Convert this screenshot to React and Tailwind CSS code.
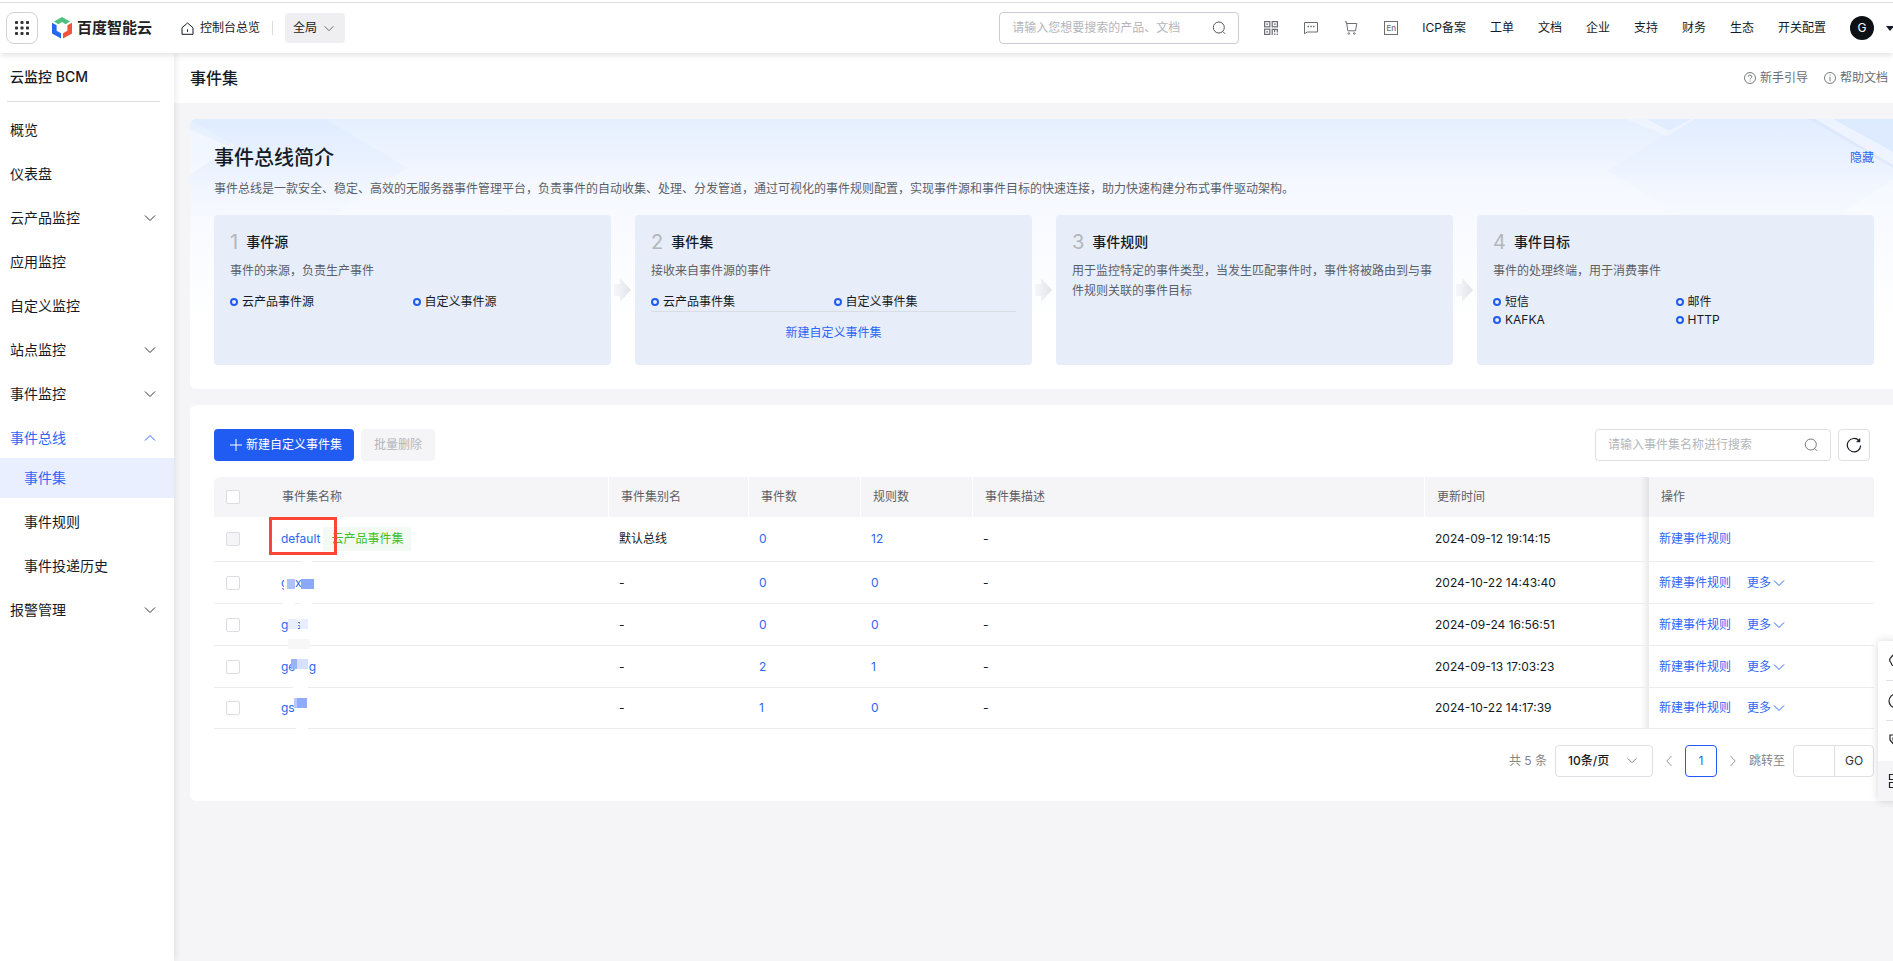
import React from "react";

const Chevron = ({ className = "", d = "M1 1.5 6 6.5 11 1.5" }) => (
  <svg viewBox="0 0 12 8" className={`h-2 w-3 shrink-0 ${className}`} fill="none" stroke="currentColor" strokeWidth="1" aria-hidden="true">
    <path d={d} />
  </svg>
);

const SearchIcon = ({ className = "" }) => (
  <svg viewBox="0 0 14 14" className={`size-3.5 shrink-0 ${className}`} fill="none" stroke="currentColor" aria-hidden="true">
    <circle cx="6.8" cy="6.5" r="5.5" />
    <path d="m10.8 10.5 2.3 2.3" />
  </svg>
);

const Logo = () => (
  <a href="#home" className="flex items-center gap-[5px]" aria-label="百度智能云">
    <svg viewBox="0 0 20 22" className="h-[22px] w-5" aria-hidden="true">
      <path d="M10 0 18 4.6 13.6 7.2 10 5.1 6.4 7.2 2 4.6Z" fill="#4ebf7e" />
      <path d="M0 5.7 4.6 8.3V13.7L9 16.3V21.6L0 16.4Z" fill="#2468f2" />
      <path d="M20 5.7 15.4 8.3V13.7L11 16.3V21.6L20 16.4Z" fill="#f0553a" />
    </svg>
    <span className="text-[15px] leading-5 font-bold text-[#222]">百度智能云</span>
  </a>
);

const QrIcon = () => (
  <svg viewBox="0 0 14 14" className="size-3.5" fill="none" stroke="currentColor" strokeWidth="1.2" aria-hidden="true">
    <rect x=".6" y=".6" width="5.200" height="5.200" />
    <rect x="8.200" y=".6" width="5.200" height="5.200" />
    <rect x=".6" y="8.200" width="5.200" height="5.200" />
    <path d="M2.300 3.200h1.800M9.900 3.200h1.800M2.300 10.800h1.800M8.200 14V8.300h2.400v3M10.600 8.300h3.300M13.300 8v3.500M10.800 14v-1.500M13.300 14v-1.500" />
  </svg>
);

const MessageIcon = () => (
  <svg viewBox="0 0 14 14" className="size-3.5" fill="none" stroke="currentColor" aria-hidden="true">
    <path d="M.5 1.500h13v9.500H3.200L.5 12.800Z" />
    <path d="M3.500 5.500h1.500M6.300 5.500h1.500M9 5.500h1.500" strokeWidth="1.300" />
  </svg>
);

const CartIcon = () => (
  <svg viewBox="0 0 14 14" className="size-3.5" fill="none" stroke="currentColor" aria-hidden="true">
    <path d="M.8.8h1.700l1.300 9h7.700l1.300-7.300H2.800" />
    <circle cx="4.800" cy="12.500" r=".8" />
    <circle cx="10.300" cy="12.500" r=".8" />
  </svg>
);

const EnIcon = () => (
  <span className="flex size-3.5 items-center justify-center border border-current text-[8px] leading-none font-medium">En</span>
);

const topIcons = [
  ["二维码", QrIcon],
  ["消息", MessageIcon],
  ["购物车", CartIcon],
  ["语言", EnIcon],
];

const topLinks = ["ICP备案", "工单", "文档", "企业", "支持", "财务", "生态", "开关配置"];

function TopBar() {
  return (
    <header className="relative z-20 flex h-[53px] shrink-0 items-center overflow-x-clip border-t-3 border-white bg-white pl-1.5 text-xs whitespace-nowrap shadow-[0_2px_6px_rgba(0,0,0,0.12)] before:absolute before:inset-x-0 before:-top-px before:h-px before:bg-[#dcdcdc]">
      <button type="button" aria-label="产品导航" className="flex size-8 items-center justify-center rounded-lg border border-[#d0d2d6] text-[#333]">
        <svg viewBox="0 0 14 14" className="size-3.5" fill="currentColor" aria-hidden="true">
          {[0, 5.500, 11].map((y) => [0, 5.500, 11].map((x) => <rect key={`${x}-${y}`} x={x} y={y} width="3" height="3" rx=".8" />))}
        </svg>
      </button>
      <div className="ml-3.5"><Logo /></div>
      <a href="#overview" className="ml-[29px] flex items-center gap-1.5">
        <svg viewBox="0 0 13 13" className="size-[13px]" fill="none" stroke="currentColor" aria-hidden="true">
          <path d="M6.500 1 12 5.700V12.300H1V5.700Z" strokeLinejoin="round" />
          <path d="M6.500 7.300v2.500" />
        </svg>
        控制台总览
      </a>
      <span className="ml-3 h-3.5 w-px bg-[#d9dbdf]" />
      <button type="button" className="ml-3 flex h-[30px] w-15 items-center justify-between rounded bg-[#efeff1] px-2">
        全局
        <Chevron className="mr-0.5 h-[7px] w-2.5 text-[#555]" />
      </button>
      <label className="ml-auto flex h-8 w-60 items-center rounded border border-[#c9cbd0] px-3">
        <input type="search" aria-label="搜索产品、文档" placeholder="请输入您想要搜索的产品、文档" className="min-w-0 flex-1 bg-transparent outline-none placeholder:text-[#b4b6bb]" />
        <SearchIcon className="text-[#555]" />
      </label>
      <div className="ml-3 flex">
        {topIcons.map(([label, Icon]) => (
          <button key={label} type="button" aria-label={label} className="flex h-8 w-10 items-center justify-center text-[#6b6d73]">
            <Icon />
          </button>
        ))}
      </div>
      <nav className="-ml-px flex">
        {topLinks.map((text) => (
          <a key={text} href="#top" className="px-3">{text}</a>
        ))}
      </nav>
      <button type="button" aria-label="账户" className="ml-3 flex items-center gap-3">
        <span className="flex size-6 items-center justify-center rounded-full bg-[#0e1114] text-white">G</span>
        <svg viewBox="0 0 7 5" className="h-[5px] w-[7px]" fill="#151b26" aria-hidden="true"><path d="M0 0h8L4 5Z" /></svg>
      </button>
    </header>
  );
}

const menu = [
  { text: "概览" },
  { text: "仪表盘" },
  { text: "云产品监控", group: true },
  { text: "应用监控" },
  { text: "自定义监控" },
  { text: "站点监控", group: true },
  { text: "事件监控", group: true },
  { text: "事件总线", group: true, children: ["事件集", "事件规则", "事件投递历史"] },
  { text: "报警管理", group: true },
];

function Sidebar() {
  return (
    <aside className="relative z-10 w-[174px] shrink-0 bg-white text-sm shadow-[2px_0_6px_rgba(0,0,0,0.08)]">
      <h2 className="mr-3.5 ml-[7px] flex h-[49px] items-center border-b border-[#dfe0e3] pl-[3px] font-medium">云监控 BCM</h2>
      <ul className="mt-2 flex flex-col gap-1">
        {menu.map((item) => (
          <li key={item.text}>
            {item.group ? (
              <button type="button" aria-expanded={Boolean(item.children)} className={`flex h-10 w-full items-center justify-between pr-[18px] pl-2.5 ${item.children ? "text-[#2d66f5]" : ""}`}>
                {item.text}
                <Chevron d={item.children ? "M1 6.500 6 1.500 11 6.500" : undefined} className={item.children ? "" : "text-[#333]"} />
              </button>
            ) : (
              <a href="#menu" className="flex h-10 items-center pl-2.5">{item.text}</a>
            )}
            {item.children && (
              <ul className="flex flex-col gap-1">
                {item.children.map((child, i) => (
                  <li key={child}>
                    <a href="#submenu" className={`flex h-10 items-center pl-6 ${i === 0 ? "bg-[#e9effe] text-[#2d66f5]" : ""}`}>{child}</a>
                  </li>
                ))}
              </ul>
            )}
          </li>
        ))}
      </ul>
    </aside>
  );
}

const steps = [
  { title: "事件源", desc: "事件的来源，负责生产事件", items: ["云产品事件源", "自定义事件源"] },
  { title: "事件集", desc: "接收来自事件源的事件", items: ["云产品事件集", "自定义事件集"], link: "新建自定义事件集" },
  { title: "事件规则", desc: "用于监控特定的事件类型，当发生匹配事件时，事件将被路由到与事件规则关联的事件目标", items: [] },
  { title: "事件目标", desc: "事件的处理终端，用于消费事件", items: ["短信", "邮件", "KAFKA", "HTTP"] },
];

const StepArrow = () => (
  <svg viewBox="0 0 17 24" className="absolute top-1/2 -right-5 h-6 w-[17px] -translate-y-1/2" aria-hidden="true">
    <defs>
      <linearGradient id="arrow" x1="0" x2="1">
        <stop offset="0" stopColor="#e6e8ee" stopOpacity=".3" />
        <stop offset="1" stopColor="#e0e2e8" />
      </linearGradient>
    </defs>
    <path d="M0 6h6V0l11 12L6 24V18H0Z" fill="url(#arrow)" />
  </svg>
);

const Decoration = () => (
  <>
    <svg viewBox="0 0 220 220" className="absolute top-0 left-0 size-[220px]" aria-hidden="true">
      <defs>
        <linearGradient id="facet" x1="0" x2="0" y1="0" y2="1">
          <stop offset="0" stopColor="#dfecff" stopOpacity=".9" />
          <stop offset="1" stopColor="#eef4ff" stopOpacity=".2" />
        </linearGradient>
      </defs>
      <path d="M0 0H135L218 49 140 97H0V56L45 26 0 2Z" fill="url(#facet)" />
      <path d="M0 10 40 28 0 56Z" fill="#f4f8ff" opacity=".7" />
    </svg>
    <svg viewBox="0 0 290 100" className="absolute top-0 right-0 h-[100px] w-[290px]" aria-hidden="true">
      <path d="M64 14 92 0H290V97H78L4 52Z" fill="url(#facet)" opacity=".7" />
      <path d="M22 0H44L66 11 88 0H92L64 17Z" fill="#f1f6ff" opacity=".7" />
      <path d="M44 0H88L66 12Z" fill="#deebff" opacity=".7" />
      <path d="M230 0H290V33Z" fill="#dceaff" opacity=".8" />
      <path d="M212 0H230L290 33V46Z" fill="#eff5ff" opacity=".8" />
      <path d="M212 0 290 46V49L206 0Z" fill="#dbe6fb" opacity=".7" />
      <path d="M290 60 232 97H290Z" fill="#fafcff" opacity=".5" />
    </svg>
  </>
);

function Intro() {
  return (
    <section className="relative overflow-hidden rounded-l-md bg-white bg-linear-to-b from-[#e5effe] via-[#f5f8ff] via-25% to-white to-75% pt-6 pr-[19px] pb-6 pl-6">
      <Decoration />
      <div className="relative">
        <div className="flex h-[29px] items-end justify-between">
          <h2 className="text-xl leading-7 font-medium">事件总线简介</h2>
          <button type="button" className="text-xs leading-7 text-[#2d66f5]">隐藏</button>
        </div>
        <p className="mt-1.5 mb-[15px] text-xs leading-[22px] text-[#5c5f66]">
          事件总线是一款安全、稳定、高效的无服务器事件管理平台，负责事件的自动收集、处理、分发管道，通过可视化的事件规则配置，实现事件源和事件目标的快速连接，助力快速构建分布式事件驱动架构。
        </p>
        <ol className="grid grid-cols-4 gap-6">
          {steps.map((step, i) => (
            <li key={step.title} className="relative h-[150px] rounded bg-[#e7eefa] px-4 pt-3.5 text-xs">
              <h3 className="flex h-[26px] items-center gap-2 text-sm font-medium">
                <span className="text-xl font-normal text-[#b4b6bb]">{i + 1}</span>
                {step.title}
              </h3>
              <p className="mt-1.5 leading-5 text-[#5c5f66]">{step.desc}</p>
              {step.items.length > 0 && (
                <ul className="mt-3 grid grid-cols-2">
                  {step.items.map((item) => (
                    <li key={item} className="flex h-[18px] items-center gap-1">
                      <span className="size-2 rounded-full border-2 border-[#205cf2]" />
                      {item}
                    </li>
                  ))}
                </ul>
              )}
              {step.link && (
                <div className="border-t border-[#d9dde4] pt-[11px] text-center leading-5">
                  <a href="#create" className="text-[#2d66f5]">{step.link}</a>
                </div>
              )}
              {i < steps.length - 1 && <StepArrow />}
            </li>
          ))}
        </ol>
      </div>
    </section>
  );
}

const rows = [
  { name: "default", tag: "云产品事件集", alias: "默认总线", events: 0, rules: 12, time: "2024-09-12 19:14:15", height: "h-[45px]", masks: ["top-11 left-8 h-px w-2.5 bg-white"] },
  {
    name: "g  x", alias: "-", events: 0, rules: 0, time: "2024-10-22 14:43:40", height: "h-[42px]", more: true,
    masks: [
      "top-3 left-[14px] h-5 w-1 bg-white",
      "top-[17px] left-[17px] h-2.5 w-2 bg-[#adc1fa]",
      "top-[17px] left-[31px] h-2.5 w-[13px] bg-[#8ca9f9]",
      "top-[41px] left-[13px] h-px w-3 bg-white",
      "top-[41px] left-[30px] h-px w-3 bg-white",
    ],
  },
  {
    name: "g  s", alias: "-", events: 0, rules: 0, time: "2024-09-24 16:56:51", height: "h-[42px]", more: true,
    masks: [
      "top-[15px] left-[18px] h-2.5 w-2.5 bg-[#e8eefe]",
      "top-[15px] left-[30px] h-2.5 w-2 bg-[#e8eefe]",
      "top-[35px] left-[18px] h-2.5 w-[22px] bg-[#f7f7f8]",
    ],
  },
  {
    name: "ge    g", alias: "-", events: 2, rules: 1, time: "2024-09-13 17:03:23", height: "h-[42px]", more: true,
    masks: [
      "top-[13px] left-[21px] h-2.5 w-1.5 bg-[#9ab2f9]",
      "top-[13px] left-[27px] h-2.5 w-[11px] bg-[#d6e0fd]",
      "top-[41px] left-[23px] h-px w-[15px] bg-white",
    ],
  },
  {
    name: "gs", alias: "-", events: 1, rules: 0, time: "2024-10-22 14:17:39", height: "h-[41px]", more: true,
    masks: [
      "top-2.5 left-6 h-2.5 w-[3px] bg-[#b8c9fb]",
      "top-2.5 left-[27px] h-2.5 w-2.5 bg-[#8fabf9]",
      "top-10 left-[26px] h-px w-3 bg-white",
    ],
  },
];

const headings = ["事件集名称", "事件集别名", "事件数", "规则数", "事件集描述", "更新时间"];

const checkbox = "block size-3.5 appearance-none rounded-xs border border-[#dcdde0] bg-white disabled:bg-[#f5f5f7]";

const pinned = "relative before:absolute before:inset-y-0 before:-left-2 before:w-2 before:bg-linear-to-l before:from-black/8 before:to-transparent";

function EventTable() {
  return (
    <table className="w-full table-fixed border-separate border-spacing-0 text-left text-xs whitespace-nowrap">
      <colgroup>
        <col className="w-14" />
        <col className="w-[339px]" />
        <col className="w-[140px]" />
        <col className="w-28" />
        <col className="w-28" />
        <col />
        <col className="w-56" />
        <col className="w-[225px]" />
      </colgroup>
      <thead>
        <tr className="h-10 text-[#5c5f66]">
          <th className="rounded-tl-md bg-[#f5f5f7] pl-3"><input type="checkbox" aria-label="全选" className={checkbox} /></th>
          {headings.map((text, i) => (
            <th key={text} className={`bg-[#f5f5f7] px-3 font-normal ${i < 5 ? "border-r border-white" : ""}`}>{text}</th>
          ))}
          <th className={`rounded-tr bg-[#f5f5f7] px-3 font-normal ${pinned}`}>操作</th>
        </tr>
      </thead>
      <tbody>
        {rows.map((row, i) => (
          <tr key={row.time} className={`${row.height} [&>td]:border-b [&>td]:border-[#ebecee]`}>
            <td className="pl-3">
              <input type="checkbox" disabled={i === 0} aria-label={`选择 ${row.name}`} className={checkbox} />
            </td>
            <td className="relative px-[11px]">
              <div className="flex items-center gap-[3px]">
                <a href="#detail" className="whitespace-pre text-[#2d66f5]">{row.name}</a>
                {row.tag && <span className="h-6 bg-[#f3faf3] px-2 leading-6 text-[#3dbf22]">{row.tag}</span>}
              </div>
              {row.masks.map((mask) => <span key={mask} className={`absolute ${mask}`} />)}
              {i === 0 && <span className="absolute top-0 -left-px h-[38px] w-[68px] border-3 border-[#fb4537]" />}
            </td>
            <td className="px-2.5">{row.alias}</td>
            <td className="px-2.5"><a href="#events" className="text-[#2d66f5]">{row.events}</a></td>
            <td className="px-2.5"><a href="#rules" className="text-[#2d66f5]">{row.rules}</a></td>
            <td className="px-2.5">-</td>
            <td className="px-2.5">{row.time}</td>
            <td className={`bg-white px-2.5 ${pinned}`}>
              <div className="flex items-center gap-4 text-[#2d66f5]">
                <a href="#new-rule">新建事件规则</a>
                {row.more && (
                  <button type="button" className="flex items-center gap-0.5">
                    更多
                    <Chevron />
                  </button>
                )}
              </div>
            </td>
          </tr>
        ))}
      </tbody>
    </table>
  );
}

function Pagination() {
  return (
    <div className="mt-4 flex h-8 items-center justify-end text-xs text-[#84868c]">
      <span>共 5 条</span>
      <div className="relative ml-2">
        <select aria-label="每页条数" className="h-8 w-[98px] appearance-none rounded border border-[#dfe0e3] bg-white pl-3 font-medium text-[#151b26]">
          <option>10条/页</option>
        </select>
        <Chevron className="pointer-events-none absolute top-3 right-[15px] h-[7px] w-2.5 text-[#777]" />
      </div>
      <button type="button" aria-label="上一页" className="flex h-8 w-8 items-center justify-center">
        <svg viewBox="0 0 6 12" className="h-3 w-1.5" fill="none" stroke="#999" aria-hidden="true"><path d="M5.500 1 .8 6l4.700 5" /></svg>
      </button>
      <button type="button" aria-current="page" className="size-8 rounded border border-[#205cf2] text-[#2d66f5]">1</button>
      <button type="button" aria-label="下一页" className="flex h-8 w-8 items-center justify-center">
        <svg viewBox="0 0 6 12" className="h-3 w-1.5" fill="none" stroke="#999" aria-hidden="true"><path d="M.5 1 5.200 6 .5 11" /></svg>
      </button>
      <label htmlFor="jump">跳转至</label>
      <input id="jump" type="text" className="ml-2 h-8 w-[42px] rounded-l border border-[#dfe0e3] bg-white px-2 outline-none" />
      <button type="button" className="-ml-px h-8 w-10 rounded-r border border-[#dfe0e3] text-[#333]">GO</button>
    </div>
  );
}

function ListCard() {
  return (
    <section className="rounded-l-md bg-white py-6 pr-[19px] pl-6 text-xs">
      <div className="mb-4 flex h-8 items-center pr-1">
        <button type="button" className="flex h-8 items-center gap-1 rounded bg-[#205cf2] pr-3 pl-4 text-white">
          <svg viewBox="0 0 12 12" className="size-3" stroke="currentColor" aria-hidden="true"><path d="M6 0v12M0 6h12" /></svg>
          新建自定义事件集
        </button>
        <button type="button" disabled className="ml-[7px] h-8 rounded bg-[#f5f5f7] px-[13px] text-[#b4b6bb]">批量删除</button>
        <label className="ml-auto flex h-8 w-[236px] items-center rounded border border-[#dfe0e3] px-3">
          <input type="search" aria-label="搜索事件集" placeholder="请输入事件集名称进行搜索" className="min-w-0 flex-1 bg-transparent outline-none placeholder:text-[#b4b6bb]" />
          <SearchIcon className="text-[#777]" />
        </label>
        <button type="button" aria-label="刷新" className="ml-[7px] flex size-8 items-center justify-center rounded border border-[#dfe0e3]">
          <svg viewBox="0 0 16 16" className="size-4" fill="none" stroke="#151b26" strokeWidth="1.200" aria-hidden="true">
            <path d="M14.700 8.500A6.700 6.700 0 1 1 13 3.700" />
            <path d="M14 1.500V5l-3.500-.2Z" fill="#151b26" strokeWidth=".5" />
          </svg>
        </button>
      </div>
      <EventTable />
      <Pagination />
    </section>
  );
}

const tools = [
  ["客服", <path key="a" d="M3 9.500A3 3 0 0 1 3 4.500 5.500 5.500 0 0 1 13 5M3 9.500Q3.500 12.500 6 13" />],
  ["咨询", <circle key="b" cx="8" cy="8" r="7" />],
  ["标签", <path key="c" d="M2 2v5l6 7 6-6-6-6ZM5 5h1v2H5Z" />],
  ["更多", <path key="d" d="M1.500 1.500h5v5h-5ZM9.500 1.500h5v5h-5ZM1.500 9.500h5v5h-5ZM9.500 9.500h5v5h-5Z" />],
];

function FloatingTools() {
  return (
    <div className="fixed top-[641px] -right-[25px] z-30 w-10 overflow-hidden rounded-l bg-white shadow-[0_0_8px_rgba(0,0,0,0.16)]">
      {tools.map(([label, shape], i) => (
        <button
          key={label}
          type="button"
          aria-label={label}
          className={`relative flex h-10 w-full items-center pl-2.5 ${i === 3 ? "bg-[#f5f5f7]" : ""} ${i < 2 ? "after:absolute after:right-0 after:bottom-0 after:left-2 after:h-px after:bg-[#dfe0e3]" : ""}`}
        >
          <svg viewBox="0 0 16 16" className="size-4" fill="none" stroke="#222" strokeWidth="1.200" aria-hidden="true">{shape}</svg>
        </button>
      ))}
    </div>
  );
}

export default function App() {
  return (
    <div lang="zh-CN" className="flex min-h-screen flex-col overflow-x-clip bg-[#f5f5f7] font-['Inter','Noto_Sans_CJK_SC',sans-serif] text-[#151b26]">
      <TopBar />
      <div className="flex flex-1">
        <Sidebar />
        <main className="min-w-0 flex-1">
          <div className="flex h-[50px] items-center justify-between bg-white pr-[5px] pl-4">
            <h1 className="text-base font-medium">事件集</h1>
            <div className="flex gap-4 text-xs text-[#6b6d73]">
              <a href="#guide" className="flex items-center gap-1">
                <svg viewBox="0 0 12 12" className="size-3" fill="none" stroke="currentColor" strokeWidth=".9" aria-hidden="true">
                  <circle cx="6" cy="6" r="5.500" />
                  <path d="M4.300 4.700a1.700 1.700 0 1 1 2.500 1.500Q6 6.600 6 7.500M6 8.500v.9" />
                </svg>
                新手引导
              </a>
              <a href="#docs" className="flex items-center gap-1">
                <svg viewBox="0 0 12 12" className="size-3" fill="none" stroke="currentColor" strokeWidth=".9" aria-hidden="true">
                  <circle cx="6" cy="6" r="5.500" />
                  <path d="M6 2.700v1M6 4.700v4.600" />
                </svg>
                帮助文档
              </a>
            </div>
          </div>
          <div className="flex flex-col gap-4 py-4 pl-4">
            <Intro />
            <ListCard />
          </div>
        </main>
      </div>
      <FloatingTools />
    </div>
  );
}
